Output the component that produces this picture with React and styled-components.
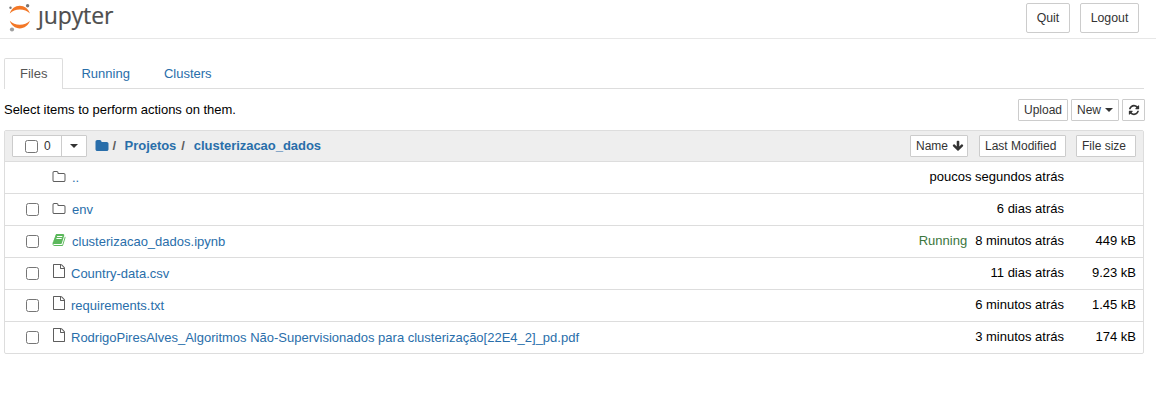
import React from "react";
import styled, { createGlobalStyle } from "styled-components";

const Global = createGlobalStyle`
  * { box-sizing: border-box; }
  body {
    margin: 0;
    background: #fff;
    color: #000;
    font: 13px/20px "Liberation Sans", Arial, sans-serif;
  }
`;

const paths = {
  refresh:
    "M1639 1056q0 5-1 7-64 268-268 434.5t-478 166.5q-146 0-282.5-55t-243.5-157l-129 129q-19 19-45 19t-45-19-19-45v-448q0-26 19-45t45-19h448q26 0 45 19t19 45-19 45l-137 137q71 66 161 102t187 36q134 0 250-65t186-179q11-17 53-117 8-23 30-23h192q13 0 22.5 9.5t9.5 22.5zm25-800v448q0 26-19 45t-45 19h-448q-26 0-45-19t-19-45 19-45l138-138q-148-137-349-137-134 0-250 65t-186 179q-11 17-53 117-8 23-30 23h-199q-13 0-22.5-9.5t-9.5-22.5v-7q65-268 270-434.5t480-166.5q146 0 284 55.5t245 156.5l130-129q19-19 45-19t45 19 19 45z",
  arrow:
    "M1675 832q0 53-37 90l-651 652q-39 37-91 37-53 0-90-37l-651-652q-38-36-38-90 0-53 38-91l74-75q39-37 91-37 53 0 90 37l294 294v-704q0-52 38-90t90-38h128q52 0 90 38t38 90v704l294-294q37-37 90-37 52 0 91 37l75 75q37 39 37 91z",
  folder:
    "M1728 608v704q0 92-66 158t-158 66h-1216q-92 0-158-66t-66-158v-960q0-92 66-158t158-66h320q92 0 158 66t66 158v32h672q92 0 158 66t66 158z",
  folderOpen:
    "M1600 1312v-704q0-40-28-68t-68-28h-704q-40 0-68-28t-28-68v-64q0-40-28-68t-68-28h-320q-40 0-68 28t-28 68v960q0 40 28 68t68 28h1216q40 0 68-28t28-68zm128-704v704q0 92-66 158t-158 66h-1216q-92 0-158-66t-66-158v-960q0-92 66-158t158-66h320q92 0 158 66t66 158v32h672q92 0 158 66t66 158z",
  file:
    "M1596 380q28 28 48 76t20 88v1152q0 40-28 68t-68 28h-1344q-40 0-68-28t-28-68v-1600q0-40 28-68t68-28h896q40 0 88 20t76 48zm-444-244v376h376q-10-29-22-41l-313-313q-12-12-41-22zm384 1528v-1024h-416q-40 0-68-28t-28-68v-416h-768v1536h1280z",
  book:
    "M1703 478q40 57 18 129l-275 906q-19 64-76.5 107.5t-122.5 43.5h-923q-77 0-148.5-53.5t-99.5-131.5q-24-67-2-127 0-4 3-27t4-37q1-8-3-21.500t-3-19.500q2-11 8-21t16.500-23.500 16.500-23.500q23-38 45-91.500t30-91.500q3-10 .5-30t-.5-28q3-11 17-28t17-23q21-36 42-92t25-90q1-9-2.500-32t.5-28q4-13 22-30.500t22-22.500q19-26 42.500-84.500t27.500-96.500q1-8-3-25.500t-2-26.500q2-8 9-18t18-23 17-21q8-12 16.500-30.500t15-35 16-36 19.500-32 26.500-23.500 36-11.500 47.500 5.500l-1 3q38-9 51-9h761q74 0 114 56t18 130l-274 906q-36 119-71.500 153.500t-128.500 34.500h-869q-27 0-38 15-11 16-1 43 24 70 144 70h923q29 0 56-15.500t35-41.500l300-987q7-22 5-57 38 15 59 43zm-1064 2q-4 13 2 22.500t20 9.500h608q13 0 25.500-9.500t16.500-22.500l21-64q4-13-2-22.500t-20-9.500h-608q-13 0-25.500 9.500t-16.500 22.500zm-83 256q-4 13 2 22.500t20 9.500h608q13 0 25.500-9.500t16.500-22.500l21-64q4-13-2-22.500t-20-9.500h-608q-13 0-25.500 9.500t-16.500 22.500z",
};

const Glyph = styled.svg`
  width: ${(p) => p.$size}px;
  height: ${(p) => p.$size}px;
  flex: none;
  fill: currentColor;
`;
const Icon = ({ name, size = 14 }) => (
  <Glyph $size={size} viewBox="0 0 1792 1792" aria-hidden="true">
    <path d={paths[name]} />
  </Glyph>
);

const Header = styled.header`
  display: flex;
  align-items: flex-start;
  justify-content: space-between;
  height: 39px;
  padding: 3px 17px 0 8px;
  border-bottom: 1px solid #e7e7e7;
`;
const Brand = styled.div`
  display: flex;
  align-items: flex-start;
  color: #4e4e4e;
`;
const Planet = styled.svg`
  width: 24px;
  height: 30px;
`;
const Wordmark = styled.span`
  margin-left: 6px;
  font: 23px/25px "Open Sans", sans-serif;
  letter-spacing: -0.1px;
  -webkit-text-stroke: 0.2px #4e4e4e;
`;
const Stem = styled.span`
  display: inline-block;
  clip-path: inset(8px -4px -8px -6px);
`;
const HeaderActions = styled.div`
  display: flex;
  gap: 10px;
`;
const Button = styled.button`
  display: flex;
  align-items: center;
  justify-content: center;
  width: ${(p) => p.$width}px;
  height: ${(p) => (p.$large ? 30 : 22)}px;
  padding: 0;
  gap: 4px;
  border: 1px solid #ccc;
  border-radius: ${(p) => (p.$large ? 2 : 1)}px;
  background: #fff;
  color: #333;
  font: ${(p) => (p.$large ? 12.3 : 12)}px/18px "Liberation Sans", Arial, sans-serif;
  white-space: nowrap;
`;
const Caret = styled.i`
  border: 4px solid transparent;
  border-top-color: #333;
  border-bottom: 0;
`;

const Main = styled.main`
  width: 1140px;
  margin: 19px 0 0 4px;
`;
const Tabs = styled.nav`
  display: flex;
  height: 31px;
  gap: 2px;
  border-bottom: 1px solid #ddd;
`;
const Tab = styled.a`
  height: ${(p) => (p.$active ? 31 : 30)}px;
  padding: 5px 15px 0;
  border: solid ${(p) => (p.$active ? "#ddd" : "transparent")};
  border-width: 1px 1px 0;
  border-radius: 2px 2px 0 0;
  background: ${(p) => (p.$active ? "#fff" : "transparent")};
  color: ${(p) => (p.$active ? "#555" : "#296eaa")};
`;
const Toolbar = styled.div`
  display: flex;
  align-items: center;
  height: 22px;
  margin: 10px -1px 9px 0;
  gap: 3px;
`;
const Hint = styled.span`
  flex: 1;
  letter-spacing: -0.02px;
`;

const List = styled.section`
  border: 1px solid #ddd;
  border-radius: 2px;
`;
const ListHeader = styled.div`
  display: flex;
  align-items: center;
  height: 30px;
  padding: 0 7px;
  background: #eee;
`;
const SelectGroup = styled.div`
  display: flex;
  width: 75px;
  height: 22px;
  margin-right: 8px;
  border: 1px solid #ccc;
  border-radius: 1px;
  background: #fff;
  color: #333;
  font-size: 12px;
`;
const SelectAll = styled.label`
  display: flex;
  align-items: center;
  width: 49px;
  padding-left: 12px;
  gap: 6px;
  border-right: 1px solid #ccc;
`;
const SelectMenu = styled.span`
  display: flex;
  flex: 1;
  align-items: center;
  justify-content: center;
`;
const Checkbox = styled.input.attrs({ type: "checkbox" })`
  width: 13px;
  height: 13px;
  margin: 0;
`;
const Crumbs = styled.div`
  display: flex;
  flex: 1;
  align-items: center;
  padding-bottom: 1px;
  color: #296eaa;
  font-weight: bold;
  letter-spacing: -0.04px;
`;
const Slash = styled.span`
  margin: 0 ${(p) => p.$after}px 0 ${(p) => p.$before}px;
  color: #5e5e5e;
`;
const SortButtons = styled.div`
  display: flex;
`;
const Sort = styled(Button)`
  justify-content: flex-start;
  margin-left: ${(p) => p.$gap || 0}px;
  padding-left: 5px;
`;

const Row = styled.div`
  display: flex;
  align-items: center;
  height: 32px;
  padding: 0 7px 2px 21px;
  border-top: 1px solid #ddd;
`;
const CheckCell = styled.span`
  display: flex;
  width: 26px;
  padding-top: 2px;
`;
const IconCell = styled.span`
  display: flex;
  width: ${(p) => (p.$narrow ? 19 : 20)}px;
  color: ${(p) => p.$color};
  padding-bottom: ${(p) => p.$lift}px;
`;
const Name = styled.a`
  flex: 1;
  padding-top: 3px;
  color: #296eaa;
`;
const Running = styled.span`
  margin-right: 8px;
  color: #3c763d;
`;
const Size = styled.span`
  width: 72px;
  text-align: right;
`;

const kinds = {
  folder: { icon: "folderOpen", color: "#5e5e5e", lift: 0 },
  notebook: { icon: "book", color: "#5cb85c", lift: 1 },
  file: { icon: "file", color: "#5e5e5e", lift: 3 },
};

const rows = [
  { kind: "folder", name: "..", time: "poucos segundos atrás", parent: true },
  { kind: "folder", name: "env", time: "6 dias atrás" },
  { kind: "notebook", name: "clusterizacao_dados.ipynb", time: "8 minutos atrás", size: "449 kB", running: true },
  { kind: "file", name: "Country-data.csv", time: "11 dias atrás", size: "9.23 kB" },
  { kind: "file", name: "requirements.txt", time: "6 minutos atrás", size: "1.45 kB" },
  {
    kind: "file",
    name: "RodrigoPiresAlves_Algoritmos Não-Supervisionados para clusterização[22E4_2]_pd.pdf",
    time: "3 minutos atrás",
    size: "174 kB",
  },
];

export default function App() {
  return (
    <>
      <Global />
      <Header>
        <Brand>
          <Planet viewBox="0 0 24 30">
            <g fill="#f37726">
              <path d="M1.800 10.500C3.300 5.800 7.200 2.800 11.800 2.800S20.300 5.800 21.900 10.500C19.300 7.900 15.900 6.500 11.800 6.500S4.400 7.900 1.800 10.500Z" />
              <path d="M1.800 17.800C4.400 20.400 7.700 21.700 11.800 21.700S19.300 20.400 21.900 17.800C20.300 22.400 16.400 25.400 11.800 25.400S3.300 22.400 1.800 17.800Z" />
            </g>
            <circle cx="19.600" cy="2.700" r="1.700" fill="#767677" />
            <circle cx="2.500" cy="4.800" r="1.200" fill="#767677" />
            <circle cx="4" cy="26.500" r="2.100" fill="#9e9e9e" />
          </Planet>
          <Wordmark>
            <Stem>j</Stem>upyter
          </Wordmark>
        </Brand>
        <HeaderActions>
          <Button $large $width={44}>Quit</Button>
          <Button $large $width={59}>Logout</Button>
        </HeaderActions>
      </Header>
      <Main>
        <Tabs>
          <Tab $active>Files</Tab>
          <Tab>Running</Tab>
          <Tab>Clusters</Tab>
        </Tabs>
        <Toolbar>
          <Hint>Select items to perform actions on them.</Hint>
          <Button $width={50}>Upload</Button>
          <Button $width={48}>New<Caret /></Button>
          <Button $width={23}><Icon name="refresh" size={12} /></Button>
        </Toolbar>
        <List>
          <ListHeader>
            <SelectGroup>
              <SelectAll><Checkbox />0</SelectAll>
              <SelectMenu><Caret /></SelectMenu>
            </SelectGroup>
            <Crumbs>
              <Icon name="folder" />
              <Slash $before={3.5} $after={8.5}>/</Slash>
              Projetos
              <Slash $before={5} $after={9}>/</Slash>
              clusterizacao_dados
            </Crumbs>
            <SortButtons>
              <Sort $width={58}>Name<Icon name="arrow" size={12} /></Sort>
              <Sort $width={87} $gap={11}>Last Modified</Sort>
              <Sort $width={60} $gap={10}>File size</Sort>
            </SortButtons>
          </ListHeader>
          {rows.map((r) => {
            const kind = kinds[r.kind];
            return (
              <Row key={r.name}>
                <CheckCell>{!r.parent && <Checkbox />}</CheckCell>
                <IconCell $color={kind.color} $lift={kind.lift} $narrow={r.kind === "file"}>
                  <Icon name={kind.icon} />
                </IconCell>
                <Name>{r.name}</Name>
                {r.running && <Running>Running</Running>}
                <span>{r.time}</span>
                <Size>{r.size}</Size>
              </Row>
            );
          })}
        </List>
      </Main>
    </>
  );
}
